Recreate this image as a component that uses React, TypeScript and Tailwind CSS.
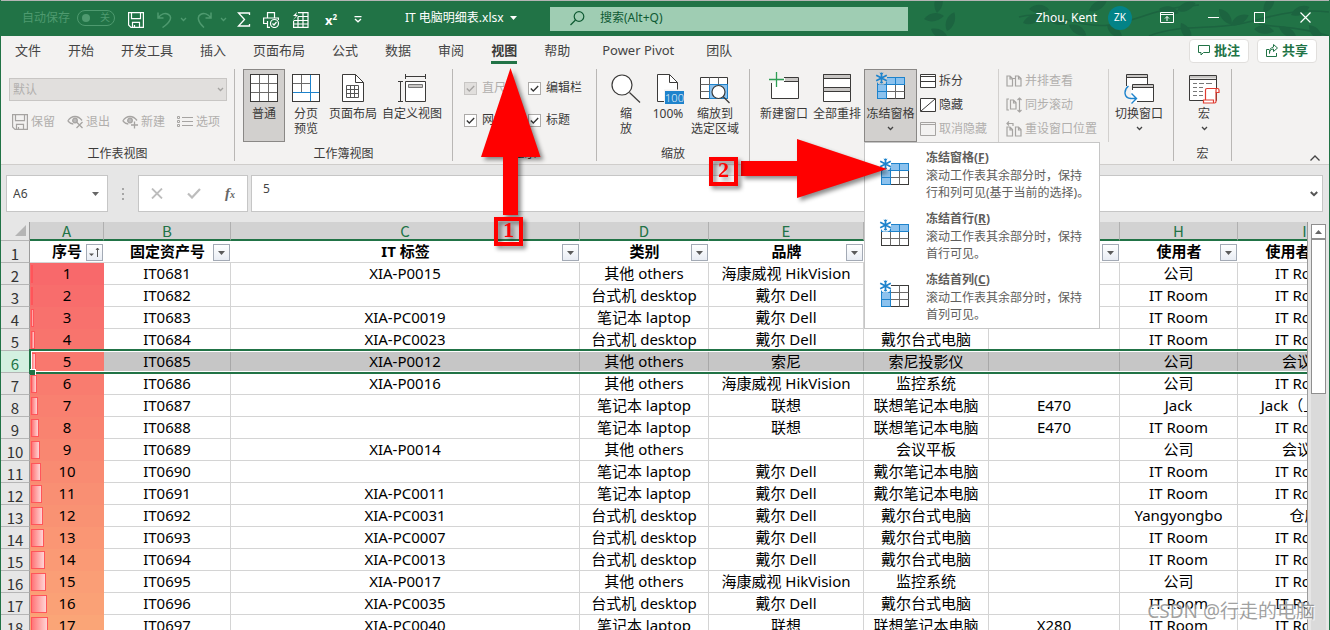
import type { ReactNode } from "react";

const INK = "#3b3a39";
const FADE = "#a6a4a2";
const BLUE = "#1e83cc";
const SKY = "#8cc2ee";

/* ---------- small glyphs ---------- */

function Chevron({ className = "", color = "#444" }: { className?: string; color?: string }) {
  return (
    <svg width="7" height="5" viewBox="0 0 7 5" className={className} fill="none" stroke={color} strokeWidth="1.300">
      <path d="M1 1l2.500 2.500L6 1" />
    </svg>
  );
}

function Caret({ color = "#666", className = "" }: { color?: string; className?: string }) {
  return (
    <svg width="7" height="4" viewBox="0 0 7 4" className={className}>
      <path d="M0 0h7L3.500 4z" fill={color} />
    </svg>
  );
}

function FreezeIcon({ mode, halo = "#fff", className = "" }: { mode: "both" | "row" | "col"; halo?: string; className?: string }) {
  const top = mode !== "col";
  const left = mode !== "row";
  return (
    <svg width="31" height="28" viewBox="0 0 31 28" fill="none" className={className}>
      <rect x="2.500" y="5.500" width="27" height="21" fill="#fff" stroke={INK} />
      <path d="M2.500 12.500h27M2.500 19.500h27M11.500 5.500v21M20.500 5.500v21" stroke="#6b6a69" />
      {top && (
        <g fill={SKY} stroke={BLUE}>
          <rect x="2.500" y="5.500" width="9" height="7" />
          <rect x="11.500" y="5.500" width="9" height="7" />
          <rect x="20.500" y="5.500" width="9" height="7" />
        </g>
      )}
      {left && (
        <g fill={SKY} stroke={BLUE}>
          <rect x="2.500" y="5.500" width="9" height="7" />
          <rect x="2.500" y="12.500" width="9" height="7" />
          <rect x="2.500" y="19.500" width="9" height="7" />
        </g>
      )}
      <path d="M2 5h10v4L9 12.500H4L2 10z" fill={halo} />
      <path d="M6.500.5v11M1.200 3.200l10.600 5.600M11.800 3.200L1.200 8.800" stroke={BLUE} strokeWidth="1.700" />
      <path d="M4.800 1l1.700 1.500L8.200 1M4.800 11l1.700-1.500L8.200 11" stroke={BLUE} />
    </svg>
  );
}

function SaveIcon({ color }: { color: string }) {
  return (
    <svg width="16" height="16" viewBox="0 0 16 16" fill="none" stroke={color} strokeWidth="1.200">
      <path d="M.6.6h14.800v14.800H3L.6 13z M3.500.6v6h9v-6M4.500 15.400v-5h7v5M6.500 13v2" />
    </svg>
  );
}

function EyeIcon({ kind }: { kind: "x" | "plus" }) {
  return (
    <svg width="17" height="14" viewBox="0 0 17 14" fill="none" stroke={FADE} strokeWidth="1.300">
      <path d="M.8 6C3 2.500 5.500 1.500 8 1.500S13 2.800 15 5.500M.8 6c1.600 1.800 3 2.800 5.500 3" />
      <circle cx="8" cy="5.500" r="2.300" fill="#bbb" />
      {kind === "x" ? <path d="M9.500 7l6 6M15.500 7l-6 6" /> : <path d="M12.500 6.500v7M9 10h7" />}
    </svg>
  );
}

function OptionsIcon() {
  return (
    <svg width="16" height="12" viewBox="0 0 16 12" fill="none" stroke={FADE}>
      <path d="M.5.5h2v2h-2zM.5 4.500h2v2h-2zM.5 8.500h2v2h-2zM5 1.500h11M5 5.500h11M5 9.500h11" />
    </svg>
  );
}

/* ---------- large ribbon icons ---------- */

const NormalIcon = (
  <svg width="28" height="28" viewBox="0 0 28 28" fill="none">
    <rect x=".5" y=".5" width="27" height="27" fill="#fff" stroke={INK} />
    <path d="M9.500 1v26M18.500 1v26M1 9.500h26M1 18.500h26" stroke="#6b6a69" />
  </svg>
);

const BreakIcon = (
  <svg width="28" height="28" viewBox="0 0 28 28" fill="none">
    <rect x=".5" y=".5" width="27" height="27" fill="#fff" stroke={INK} />
    <path d="M9.500 1v17M1 9.500h17" stroke="#6b6a69" />
    <path d="M18.500 1v26M1 18.500h26" stroke={BLUE} />
  </svg>
);

const PageIcon = (
  <svg width="22" height="28" viewBox="0 0 22 28" fill="none" stroke={INK}>
    <path d="M.5.500h13l8 8v19H.5z" fill="#fff" />
    <path d="M13.500.500v8h8" />
    <path d="M4.500 11.500h12v12h-12zM4.500 15.500h12M4.500 19.500h12M8.500 11.500v12M12.500 11.500v12" stroke="#555" />
  </svg>
);

const CustomViewIcon = (
  <svg width="28" height="28" viewBox="0 0 28 28" fill="none" stroke={INK}>
    <path d="M7.500 0v5M27.500 0v5M7.500 2.500h20M0 7.500h5M0 27.500h5M2.500 7.500v20" />
    <path d="M7.500 7.500h20v20h-20z" fill="#fff" />
    <path d="M10.500 10.500h14v3h-14z" fill="#c8c6c4" stroke="#777" />
  </svg>
);

const ZoomIcon = (
  <svg width="30" height="29" viewBox="0 0 30 29" fill="none" stroke={INK} strokeWidth="1.200">
    <circle cx="11" cy="11" r="10" fill="#fff" />
    <path d="M18.500 18.500L29 28.500" />
  </svg>
);

const HundredIcon = (
  <svg width="22" height="30" viewBox="0 0 22 30" fill="none" className="overflow-visible">
    <path d="M.5.500h12l8 8v19H.5z" fill="#fff" stroke={INK} />
    <path d="M12.500.500v8h8" stroke={INK} />
    <path d="M7 15.500h20V30H7z" fill="#f3f2f1" />
    <path d="M8 17h19v13H8z" fill={BLUE} />
    <text x="17.500" y="28" fill="#fff" fontSize="11" textAnchor="middle" fontFamily="Open Sans, sans-serif" fontWeight="300" textRendering="geometricPrecision">
      100
    </text>
  </svg>
);

const ZoomSelectionIcon = (
  <svg width="30" height="28" viewBox="0 0 30 28" fill="none" className="overflow-visible">
    <path d="M.5 3.500h27v21H.5z" fill="#fff" stroke={INK} />
    <path d="M9.500 10.500h18v14h-18z" fill={SKY} stroke={BLUE} />
    <path d="M.5 10.500h9M.5 17.500h9M9.500 3.500v7M18.500 3.500v7" stroke="#666" />
    <circle cx="18.500" cy="18" r="6.500" fill="#fff" stroke={INK} strokeWidth="1.200" />
    <path d="M23 22.500l6.500 6.500" stroke={INK} strokeWidth="1.200" />
  </svg>
);

const NewWindowIcon = (
  <svg width="31" height="28" viewBox="0 0 31 28" fill="none" className="overflow-visible">
    <path d="M2.500 3.500h27v21h-27z" fill="#fff" />
    <path d="M0 0h15v13H0z" fill="#f3f2f1" />
    <path d="M8 7h7v6H3V9z" fill="#fff" />
    <path d="M16 4h13v3H16z" fill="#c8c6c4" />
    <path d="M15 7.500h14M15 3.500h14.500v21h-27V9" stroke={INK} />
    <path d="M7.500-2v15M0 5.500h15" stroke="#2e9e55" strokeWidth="1.300" />
  </svg>
);

const ArrangeIcon = (
  <svg width="28" height="28" viewBox="0 0 28 28" fill="none" stroke={INK}>
    <path d="M.5.500h27v27H.5z" fill="#fff" />
    <path d="M.5.500h27v4H.5zM.5 13.500h27v4H.5z" fill="#c8c6c4" />
  </svg>
);

const SwitchIcon = (
  <svg width="30" height="30" viewBox="0 0 30 30" fill="none">
    <path d="M2.500.500h21v14h-21z" fill="#fff" stroke={INK} />
    <path d="M3 1h20v3H3z" fill="#c8c6c4" />
    <path d="M3 3.500h20" stroke={INK} />
    <path d="M0 12h13v15H0z" fill="#f3f2f1" />
    <path d="M8.500 10.500h21v17h-21z" fill="#fff" stroke={INK} />
    <path d="M9 11h20v2H9z" fill="#c8c6c4" />
    <path d="M9 13.500h20" stroke={INK} />
    <path d="M7 16h6v13H7z" fill="#fff" />
    <path d="M4.500 12C-.5 16-.5 24 7 24.500h5M7.500 19.500l5 5-5 5" stroke={BLUE} strokeWidth="1.400" />
  </svg>
);

const MacroIcon = (
  <svg width="30" height="29" viewBox="0 0 30 29" fill="none" className="overflow-visible">
    <path d="M.5 1.500h27v25H.5z" fill="#fff" stroke={INK} />
    <path d="M1 2h26v2.500H1z" fill="#c8c6c4" />
    <path d="M.5 5.500h27" stroke={INK} />
    <path d="M4 9.500h4M10 9.500h5M17 9.500h6M4 13.500h4M10 13.500h4M4 17.500h4M10 17.500h4M4 21.500h4M10 21.500h4" stroke="#777" />
    <path d="M16.500 26V16c0-1 .5-1.500 1.500-1.500h10.500c1 0 1.500.8 1.500 1.800V18.500h-3v9c0 .800-.500 1.500-1.500 1.500h-11v-3h10V29" fill="#fff" stroke="#e03c31" strokeWidth="1.200" />
    <path d="M27 18.500v-2.500c0-1 .5-1.500 1.200-1.500" stroke="#e03c31" strokeWidth="1.200" />
  </svg>
);

function SplitIcon() {
  return (
    <svg width="16" height="14" viewBox="0 0 16 14" fill="none" stroke={INK}>
      <path d="M.5.500h15v13H.5z" fill="#fff" />
      <path d="M1 2.500h14M1 7.500h14" />
    </svg>
  );
}
function HideIcon() {
  return (
    <svg width="16" height="14" viewBox="0 0 16 14" fill="none" stroke={INK}>
      <path d="M.5.500h15v13H.5z" fill="#fff" />
      <path d="M1 13L15 1" />
    </svg>
  );
}
function UnhideIcon() {
  return (
    <svg width="16" height="14" viewBox="0 0 16 14" fill="none" stroke={FADE}>
      <path d="M.5.500h15v13H.5z" />
      <path d="M1 2.500h14" />
    </svg>
  );
}
function SideIcon() {
  return (
    <svg width="16" height="14" viewBox="0 0 16 14" fill="none" stroke={FADE} strokeWidth="1.200">
      <path d="M1 2h3l2.500 2.500V12H1zM9.500 2h3L15 4.500V12H9.500zM4 2v3h2.500M12.500 2v3H15M6.500 4.500h3" />
    </svg>
  );
}
function SyncIcon() {
  return (
    <svg width="16" height="16" viewBox="0 0 16 16" fill="none" stroke={FADE} strokeWidth="1.200">
      <path d="M3 2H1v11h2M4.500 3h3L10 5.500V12H4.500zM7.500 3v3H10M13.500 1v14M11.500 3l2-2 2 2M11.500 13l2 2 2-2" />
    </svg>
  );
}
function ResetIcon() {
  return (
    <svg width="16" height="16" viewBox="0 0 16 16" fill="none" stroke={FADE} strokeWidth="1.200">
      <path d="M1 6h3l2.500 2.500V15H1zM9.500 6h3L15 8.500V15H9.500zM4 6v3h2.500M12.500 6v3H15M1 2.500h6V5M3 .5l-2 2 2 2" />
    </svg>
  );
}

/* ---------- title bar ---------- */

function Foliage() {
  const leaf = "M0 0C5-7 14-8 20-3C14 3 6 4 0 0z";
  const leaves: [number, number, number][] = [
    [5, 18, 0], [18, 12, -70], [12, 28, 40], [28, 30, -60],
    [110, 8, 10], [128, 16, 30], [104, 22, -10], [150, 24, 40], [170, 10, -20], [188, 24, 50],
    [240, 8, 20], [258, 10, -15], [262, 22, 70], [300, 8, 60], [312, 24, -20], [335, 28, 15],
    [345, 12, -50], [360, 26, 40], [372, 14, -15], [390, 24, 60],
  ];
  return (
    <svg width="410" height="35" viewBox="0 0 410 35" className="absolute right-0 top-0" fill="#1c6440">
      <g fill="none" stroke="#1c6440" strokeWidth="1.500">
        <path d="M100 16c30-8 60 12 90 8s40-16 90-20M230 35c30-12 60-6 90-12s50-16 90-12M340 23c20 4 40 2 70 12" />
      </g>
      {leaves.map(([x, y, r]) => (
        <path key={x + "-" + y} d={leaf} transform={`translate(${x} ${y}) rotate(${r})`} />
      ))}
    </svg>
  );
}

function TitleBar() {
  return (
    <header className="relative flex h-9 shrink-0 items-center overflow-hidden border-t border-[#b5b5b5] bg-[#217346] pb-0.5 text-[12px] text-white">
      <Foliage />
      <div className="flex h-full w-[404px] shrink-0 items-center pl-[21px]">
        <label htmlFor="autosave" className="text-[#4e9a6f]">自动保存</label>
        <button
          id="autosave"
          aria-label="自动保存"
          className="ml-[7px] flex h-4 w-[38px] items-center justify-between rounded-full border border-[#4e9a6f] pl-1 pr-1 text-[10px] text-[#4e9a6f]"
        >
          <span className="size-2 rounded-full bg-[#4e9a6f]" />
          <span>关</span>
        </button>
        <button aria-label="保存" className="ml-[13px] pt-1"><SaveIcon color="#fff" /></button>
        <button aria-label="撤消" className="ml-[13px] flex items-center gap-2 pt-1">
          <svg width="15" height="16" viewBox="0 0 15 16" fill="none" stroke="#4e9a6f" strokeWidth="1.500">
            <path d="M1 .5V6h5.500M1.500 5.500C4 2 8 .5 11.500 2.500s3 7-6 13" />
          </svg>
          <Chevron color="#4e9a6f" />
        </button>
        <button aria-label="恢复" className="ml-[10px] flex items-center gap-2 pt-1">
          <svg width="15" height="16" viewBox="0 0 15 16" fill="none" stroke="#4e9a6f" strokeWidth="1.500">
            <path d="M14 .5V6H8.500M13.500 5.500C11 2 7 .5 3.500 2.500s-3 7 3.500 13" />
          </svg>
          <Chevron color="#4e9a6f" />
        </button>
        <button aria-label="自动求和" className="ml-[10px] pt-1">
          <svg width="14" height="15" viewBox="0 0 14 15" fill="none" stroke="#fff" strokeWidth="1.300">
            <path d="M12.500 3V1H1.500l6 6.500-6 6.500h11v-2" />
          </svg>
        </button>
        <button aria-label="打印预览" className="ml-[12px] pt-1">
          <svg width="17" height="16" viewBox="0 0 17 16" fill="none" stroke="#fff" strokeWidth="1.200">
            <path d="M4.500 6V.6h7V6M4 11.500H.6V6h14.800v2M4.500 9v6.400H7" />
            <circle cx="11.500" cy="11.500" r="4" />
            <path d="M9.500 11.500l1.500 1.500 2.500-3" />
          </svg>
        </button>
        <button aria-label="表格" className="ml-[12px] pt-1">
          <svg width="17" height="16" viewBox="0 0 17 16" fill="none" stroke="#fff" strokeWidth="1.200">
            <path d="M6 .6h10v14.800H1.600V9M6 4.500h10M1.600 8.500H16M1.600 12H16M6 4.500v11M11 .6v15" />
            <path d="M5 0L1 4h3L1 8l5-5H4z" fill="#fff" stroke="none" />
          </svg>
        </button>
        <button aria-label="上标" className="ml-4 flex h-4 pt-0.5 text-[13px] font-bold leading-4">
          x<span className="text-[8px] leading-[10px]">2</span>
        </button>
        <button aria-label="自定义快速访问工具栏" className="ml-[17px] pt-1">
          <svg width="8" height="7" viewBox="0 0 8 7" fill="none" stroke="#fff" strokeWidth="1.300">
            <path d="M.5.700h7M1 3l3 2.800L7 3" />
          </svg>
        </button>
      </div>
      <button className="flex w-[145px] shrink-0 items-center gap-1.5">
        IT 电脑明细表.xlsx <Caret color="#fff" />
      </button>
      <label className="relative mt-0.5 flex h-6 w-[358px] shrink items-center bg-[#9fcdb3] pl-5 text-[#0f5a33]">
        <svg width="15" height="15" viewBox="0 0 15 15" fill="none" stroke="#0f5a33" strokeWidth="1.200">
          <circle cx="9" cy="5.500" r="4.800" />
          <path d="M5.500 9L.5 14" />
        </svg>
        <input
          aria-label="搜索"
          placeholder="搜索(Alt+Q)"
          className="ml-[15px] min-w-0 flex-1 bg-transparent pb-0.5 outline-none placeholder:text-[#0f5a33]"
        />
      </label>
      <div className="relative ml-auto flex shrink-0 items-center pr-[18px]">
        <span>Zhou, Kent</span>
        <span className="ml-[11px] flex size-6 items-center justify-center rounded-full bg-[#038387] text-[10px]">ZK</span>
        <button aria-label="功能区显示选项" className="ml-7">
          <svg width="14" height="11" viewBox="0 0 14 11" fill="none" stroke="#fff">
            <path d="M.5.500h13v10H.5zM.5 2.500h13M7 9V4.500M5 6.500l2-2 2 2" />
          </svg>
        </button>
        <button aria-label="最小化" className="ml-[34px] w-[11px] py-1"><span className="block h-px bg-white" /></button>
        <button aria-label="最大化" className="ml-[35px] size-[11px] border border-white" />
        <button aria-label="关闭" className="ml-[35px]">
          <svg width="11" height="11" viewBox="0 0 11 11" stroke="#fff" strokeWidth="1.200"><path d="M.5.500l10 10M10.500.500l-10 10" /></svg>
        </button>
      </div>
    </header>
  );
}

/* ---------- tabs ---------- */

const TABS = ["文件", "开始", "开发工具", "插入", "页面布局", "公式", "数据", "审阅", "视图", "帮助", "Power Pivot", "团队"];

function Tabs() {
  return (
    <nav className="flex h-[30px] shrink-0 items-start pl-[14px] pr-3 text-[13px]">
      <div className="flex gap-[27px]">
        {TABS.map((t) => (
          <button
            key={t}
            className={
              t === "视图"
                ? "h-7 border-b-[3px] border-[#217346] pt-[3px] font-bold leading-[22px] text-[#3b3a39]"
                : t === "Power Pivot"
                  ? "h-7 border-b-[3px] border-transparent px-[5px] pt-[3px] leading-[22px] text-[#444]"
                  : "h-7 border-b-[3px] border-transparent pt-[3px] leading-[22px] text-[#444]"
            }
          >
            {t}
          </button>
        ))}
      </div>
      <div className="ml-auto flex gap-2 pt-[3px] font-bold text-[#217346]">
        <button className="flex h-6 w-[60px] items-center justify-center gap-1 rounded-sm border border-[#e1dfdd] bg-white pb-px">
          <svg width="12" height="11" viewBox="0 0 12 11" fill="none" stroke="#217346"><path d="M.5.500h11v7h-6l-2.500 2.500v-2.500h-2.500z" /></svg>
          批注
        </button>
        <button className="flex h-6 w-[60px] items-center justify-center gap-1 rounded-sm border border-[#e1dfdd] bg-white pb-px">
          <svg width="12" height="13" viewBox="0 0 12 13" fill="none" stroke="#217346"><path d="M3 5.500H.5v7h10V9M3.500 9.500c0-3 1.500-4.500 4-4.500v2.500L11.500 4 7.500.500V3C4.500 3.500 3 6 3.500 9.500z" /></svg>
          共享
        </button>
      </div>
    </nav>
  );
}

/* ---------- ribbon ---------- */

function Group({ label, className, children }: { label?: string; className: string; children: ReactNode }) {
  return (
    <section className={`flex shrink-0 flex-col border-r border-[#b9b7b5] ${className}`}>
      <div className="flex h-[73px]">{children}</div>
      <h2 className="mt-[5px] h-[14px] text-center text-[12px] leading-[14px]">{label}</h2>
    </section>
  );
}

function Big({ icon, lines, className, active, arrow }: { icon: ReactNode; lines: string[]; className: string; active?: boolean; arrow?: boolean }) {
  return (
    <button
      className={`flex h-[73px] flex-col items-center border pt-1 leading-[15px] ${active ? "border-[#8a8886] bg-[#d2d0ce]" : "border-transparent"} ${className}`}
    >
      <span className="flex h-7 items-start justify-center overflow-visible">{icon}</span>
      <span className="mt-1 flex flex-col whitespace-nowrap">
        {lines.map((l) => (
          <span key={l}>{l}</span>
        ))}
      </span>
      {arrow && <Chevron className="mt-[5px]" />}
    </button>
  );
}

function Small({ icon, label, faded }: { icon: ReactNode; label: string; faded?: boolean }) {
  return (
    <button disabled={faded} className={`flex h-6 items-center gap-[3px] whitespace-nowrap ${faded ? "text-[#b1afad]" : ""}`}>
      <span className="flex w-4 justify-center">{icon}</span>
      {label}
    </button>
  );
}

function Check({ label, disabled }: { label: string; disabled?: boolean }) {
  return (
    <label className={`flex h-8 items-center gap-[5px] whitespace-nowrap ${disabled ? "text-[#b1afad]" : ""}`}>
      <span className="grid size-[13px] place-items-center">
        <input
          type="checkbox"
          defaultChecked
          disabled={disabled}
          className="size-[13px] appearance-none border border-[#acaaa8] bg-white [grid-area:1/1] disabled:border-[#c8c6c4] disabled:bg-[#e1dfdd]"
        />
        <svg width="9" height="7" viewBox="0 0 9 7" fill="none" stroke={disabled ? "#a6a4a2" : "#333"} strokeWidth="1.300" className="pointer-events-none [grid-area:1/1]">
          <path d="M.8 3.500L3.300 6 8.200 1" />
        </svg>
      </span>
      {label}
    </label>
  );
}

const FREEZE_ITEMS: { mode: "both" | "row" | "col"; title: string; k: string; text: string[] }[] = [
  { mode: "both", title: "冻结窗格", k: "F", text: ["滚动工作表其余部分时，保持", "行和列可见(基于当前的选择)。"] },
  { mode: "row", title: "冻结首行", k: "R", text: ["滚动工作表其余部分时，保持", "首行可见。"] },
  { mode: "col", title: "冻结首列", k: "C", text: ["滚动工作表其余部分时，保持", "首列可见。"] },
];

function FreezeMenu() {
  return (
    <div role="menu" className="absolute left-0 top-full z-20 w-[236px] border border-[#c6c6c6] bg-white pb-[2px] text-[12px]">
      {FREEZE_ITEMS.map((it) => (
        <button key={it.k} role="menuitem" className="flex h-[61px] w-full items-start pl-[14px] pt-[6px] text-left">
          <span className="pt-[9px]"><FreezeIcon mode={it.mode} /></span>
          <span className="ml-4 whitespace-nowrap text-[#605e5c]">
            <span className="block font-bold leading-[18px]">
              {it.title}(<u>{it.k}</u>)
            </span>
            {it.text.map((line) => (
              <span key={line} className="block leading-[17px]">{line}</span>
            ))}
          </span>
        </button>
      ))}
    </div>
  );
}

function Ribbon() {
  return (
    <div className="flex shrink-0 border-b border-[#cfcdcb] pb-[3px] pt-[3px] text-[12px] text-[#3b3a39]">
      <Group label="工作表视图" className="w-[234px]">
        <div className="flex flex-1 flex-col pl-2 pr-[7px] pt-[9px] text-[#b1afad]">
          <div className="grid">
            <select
              disabled
              aria-label="工作表视图"
              className="h-[23px] appearance-none border border-[#c8c6c4] bg-[#e1dfdd] pl-[3px] opacity-100 [grid-area:1/1]"
            >
              <option>默认</option>
            </select>
            <Chevron color="#a6a4a2" className="mr-[3px] self-center justify-self-end [grid-area:1/1]" />
          </div>
          <div className="mt-[9px] flex items-center pl-[3px]">
            <button disabled className="flex h-6 w-[55px] items-center gap-[3px]"><SaveIcon color={FADE} />保留</button>
            <button disabled className="flex h-6 w-[55px] items-center gap-[2px]"><EyeIcon kind="x" />退出</button>
            <button disabled className="flex h-6 w-[55px] items-center gap-[2px]"><EyeIcon kind="plus" />新建</button>
            <button disabled className="flex h-6 items-center gap-[3px]"><OptionsIcon />选项</button>
          </div>
        </div>
      </Group>
      <Group label="工作簿视图" className="w-[218px]">
        <div className="flex gap-px pl-2">
          <Big icon={NormalIcon} lines={["普通"]} className="w-[42px]" active />
          <Big icon={BreakIcon} lines={["分页", "预览"]} className="w-[40px]" />
          <Big icon={PageIcon} lines={["页面布局"]} className="w-[52px]" />
          <Big icon={CustomViewIcon} lines={["自定义视图"]} className="w-[64px]" />
        </div>
      </Group>
      <Group label="显示" className="w-[144px]">
        <div className="grid grid-cols-[64px_1fr] content-start pl-[11px] pt-[3px]">
          <Check label="直尺" disabled />
          <Check label="编辑栏" />
          <Check label="网格线" />
          <Check label="标题" />
        </div>
      </Group>
      <Group label="缩放" className="w-[153px]">
        <div className="flex pl-2">
          <Big icon={ZoomIcon} lines={["缩", "放"]} className="w-[42px]" />
          <Big icon={HundredIcon} lines={["100%"]} className="w-[42px]" />
          <Big icon={ZoomSelectionIcon} lines={["缩放到", "选定区域"]} className="w-[52px]" />
        </div>
      </Group>
      <Group className="w-[424px]">
        <div className="flex pl-[7px]">
          <Big icon={NewWindowIcon} lines={["新建窗口"]} className="w-[54px]" />
          <Big icon={ArrangeIcon} lines={["全部重排"]} className="w-[52px]" />
          <div className="relative ml-px">
            <Big icon={<FreezeIcon mode="both" halo="#d2d0ce" className="-mt-0.5" />} lines={["冻结窗格"]} className="w-[53px]" active arrow />
            <FreezeMenu />
          </div>
          <div className="ml-[3px] w-[79px] border-r border-[#d2d0ce]">
            <Small icon={<SplitIcon />} label="拆分" />
            <Small icon={<HideIcon />} label="隐藏" />
            <Small icon={<UnhideIcon />} label="取消隐藏" faded />
          </div>
          <div className="w-[110px] border-r border-[#d2d0ce] pl-[7px]">
            <Small icon={<SideIcon />} label="并排查看" faded />
            <Small icon={<SyncIcon />} label="同步滚动" faded />
            <Small icon={<ResetIcon />} label="重设窗口位置" faded />
          </div>
          <Big icon={SwitchIcon} lines={["切换窗口"]} className="ml-[3px] w-[54px]" arrow />
        </div>
      </Group>
      <Group label="宏" className="w-[58px]">
        <div className="flex pl-1">
          <Big icon={MacroIcon} lines={["宏"]} className="w-[52px]" arrow />
        </div>
      </Group>
      <button aria-label="折叠功能区" className="ml-auto mr-[9px] self-end">
        <svg width="10" height="6" viewBox="0 0 10 6" fill="none" stroke="#444" strokeWidth="1.300"><path d="M.5 5.500L5 1l4.500 4.500" /></svg>
      </button>
    </div>
  );
}

/* ---------- formula bar ---------- */

function FormulaBar() {
  return (
    <div className="flex shrink-0 pb-[10px] pl-[5px] pr-[6px] pt-[10px] text-[13px] text-[#444]">
      <div className="flex h-[37px] w-[102px] items-center border border-[#c6c6c6] bg-white pl-[6px] pr-2">
        <input aria-label="名称框" defaultValue="A6" className="w-0 flex-1 text-[12px] outline-none" />
        <Caret />
      </div>
      <svg width="2" height="12" viewBox="0 0 2 12" fill="#a6a6a6" className="mx-[14px] self-center">
        <path d="M0 0h2v2H0zM0 5h2v2H0zM0 10h2v2H0z" />
      </svg>
      <div className="flex h-[37px] w-[110px] items-center justify-between border border-[#c6c6c6] bg-white pl-3 pr-[12px]">
        <button aria-label="取消">
          <svg width="12" height="11" viewBox="0 0 12 11" stroke="#bdbdbd" strokeWidth="1.800"><path d="M1 .5l10 10M11 .5l-10 10" /></svg>
        </button>
        <button aria-label="输入">
          <svg width="14" height="11" viewBox="0 0 14 11" fill="none" stroke="#bdbdbd" strokeWidth="2.200"><path d="M1 5.500L5 9.500 13 1" /></svg>
        </button>
        <button aria-label="插入函数" className="font-['Liberation_Serif',serif] text-[15px] font-bold italic leading-4 text-[#666]">
          f<span className="text-[10px]">x</span>
        </button>
      </div>
      <div className="ml-[3px] flex h-[37px] flex-1 items-center border border-[#c6c6c6] bg-white pl-[11px] pr-1">
        <input aria-label="编辑栏" defaultValue="5" className="h-5 flex-1 self-start pt-1 text-[12px] outline-none" />
        <svg width="8" height="6" viewBox="0 0 8 6" fill="none" stroke="#555" strokeWidth="2"><path d="M.8 1L4 4.200 7.200 1" /></svg>
      </div>
    </div>
  );
}

/* ---------- sheet ---------- */

const COLS = ["A", "B", "C", "D", "E", "F", "G", "H", "I"];
const HEADS = ["序号", "固定资产号", "IT 标签", "类别", "品牌", "", "", "使用者", "使用者 部门"];
const OTHERS = "其他 others";
const DESK = "台式机 desktop";
const LAP = "笔记本 laptop";
const HIK = "海康威视 HikVision";
const DELL = "戴尔 Dell";
const ROOM = "IT Room";

const DATA: string[][] = [
  ["XIA-P0015", OTHERS, HIK, "", "", "公司", ROOM],
  ["", DESK, DELL, "", "", ROOM, ROOM],
  ["XIA-PC0019", LAP, DELL, "", "", ROOM, ROOM],
  ["XIA-PC0023", DESK, DELL, "戴尔台式电脑", "", ROOM, ROOM],
  ["XIA-P0012", OTHERS, "索尼", "索尼投影仪", "", "公司", "会议室"],
  ["XIA-P0016", OTHERS, HIK, "监控系统", "", "公司", ROOM],
  ["", LAP, "联想", "联想笔记本电脑", "E470", "Jack", "Jack（上海）"],
  ["", LAP, "联想", "联想笔记本电脑", "E470", ROOM, ROOM],
  ["XIA-P0014", OTHERS, "", "会议平板", "", "公司", "会议室"],
  ["", LAP, DELL, "戴尔笔记本电脑", "", ROOM, ROOM],
  ["XIA-PC0011", LAP, DELL, "戴尔笔记本电脑", "", ROOM, ROOM],
  ["XIA-PC0031", DESK, DELL, "戴尔台式电脑", "", "Yangyongbo", "仓库"],
  ["XIA-PC0007", DESK, DELL, "戴尔台式电脑", "", ROOM, ROOM],
  ["XIA-PC0013", DESK, DELL, "戴尔台式电脑", "", ROOM, ROOM],
  ["XIA-P0017", OTHERS, HIK, "监控系统", "", "公司", ROOM],
  ["XIA-PC0035", DESK, DELL, "戴尔台式电脑", "", ROOM, ROOM],
  ["XIA-PC0040", LAP, "联想", "联想笔记本电脑", "X280", ROOM, ROOM],
];

function scaleColor(n: number) {
  const t = (n - 1) / 16;
  return `rgb(${Math.round(248 + 2 * t)}, ${Math.round(105 + 60 * t)}, ${Math.round(107 + 12 * t)})`;
}

function FilterButton({ sorted }: { sorted?: boolean }) {
  return (
    <button
      aria-label="筛选"
      className="absolute bottom-px right-px flex size-[17px] items-center justify-center border border-[#a3aab5] bg-linear-to-b from-white to-[#e9edf4]"
    >
      {sorted ? (
        <svg width="11" height="11" viewBox="0 0 11 11" fill="none" stroke="#555">
          <path d="M8.500 1v9M7 3l1.500-2L10 3" />
          <path d="M0 6.500h5L2.500 9z" fill="#555" stroke="none" />
        </svg>
      ) : (
        <Caret color="#5b5b5b" />
      )}
    </button>
  );
}

const ROW_HEAD =
  "border-b border-r border-b-[#b5b5b5] border-r-[#9b9b9b] p-0 align-bottom font-['Noto_Sans_CJK_SC',sans-serif] font-normal leading-[17px]";

function Sheet() {
  return (
    <div className="flex min-h-0 flex-1">
      <div className="min-w-0 flex-1 overflow-hidden border-r border-[#9b9b9b]">
        <table className="w-[1371px] table-fixed border-separate border-spacing-0 text-center text-[15px] text-black">
          <colgroup>
            <col className="w-[29px]" />
            <col className="w-[74px]" />
            <col className="w-[127px]" />
            <col className="w-[349px]" />
            <col className="w-[129px]" />
            <col className="w-[155px]" />
            <col className="w-[125px]" />
            <col className="w-[131px]" />
            <col className="w-[118px]" />
            <col className="w-[134px]" />
          </colgroup>
          <thead>
            <tr className="h-[19px]">
              <td className="border-b border-r border-b-[#b5b5b5] border-r-[#9b9b9b] p-0 pr-[3px] align-bottom">
                <svg width="11" height="11" viewBox="0 0 11 11" className="mb-1 ml-auto"><path d="M11 0v11H0z" fill="#b5b5b5" /></svg>
              </td>
              {COLS.map((c) => (
                <th
                  key={c}
                  scope="col"
                  className="border-b-2 border-r border-b-[#217346] border-r-[#b0b0b0] bg-[#d2d2d2] p-0 pt-px font-['Noto_Sans_CJK_SC',sans-serif] font-normal leading-[16px] text-[#217346]"
                >
                  {c}
                </th>
              ))}
            </tr>
          </thead>
          <tbody>
            <tr className="h-[22px] bg-white">
              <th scope="row" className={`bg-[#e6e6e6] text-[#333] ${ROW_HEAD}`}>1</th>
              {HEADS.map((h, i) => (
                <td key={COLS[i]} className="relative whitespace-nowrap border-b border-[#d4d4d4] p-0 font-bold leading-[21px]">
                  {h}
                  {i < 8 && <FilterButton sorted={i === 0} />}
                </td>
              ))}
            </tr>
            {DATA.map((row, i) => {
              const n = i + 1;
              const sel = n === 5;
              return (
                <tr key={n} className={sel ? "relative h-[22px] bg-[#c6c6c6]" : "h-[22px] bg-white"}>
                  <th scope="row" className={`${sel ? "bg-[#d3f0e0] text-[#217346]" : "bg-[#e6e6e6] text-[#333]"} ${ROW_HEAD}`}>
                    {n + 1}
                    {sel && (
                      <span className="pointer-events-none absolute -bottom-px -top-[2px] left-[28px] right-0 z-10 border-2 border-[#217346] shadow-[inset_0_0_0_1px_white]">
                        <span className="absolute -bottom-[3px] -left-px size-[6px] border-r border-t border-white bg-[#217346]" />
                      </span>
                    )}
                  </th>
                  <td className="p-0 align-top" style={{ backgroundColor: scaleColor(n) }}>
                    <div className="relative leading-[21px]">
                      <span
                        className="absolute left-px top-[2px] h-[18px] border border-[#ff555a] bg-linear-to-r from-[#ff7478] to-[#ffd3d5]"
                        style={{ width: n }}
                      />
                      <span className="relative">{n}</span>
                    </div>
                  </td>
                  {["IT0" + (680 + n), ...row].map((v, j) => (
                    <td
                      key={COLS[j + 1]}
                      className={`overflow-hidden whitespace-nowrap border-b border-r p-0 leading-[21px] ${sel ? "border-[#a8a8a8]" : "border-[#d4d4d4]"}`}
                    >
                      {v}
                    </td>
                  ))}
                </tr>
              );
            })}
          </tbody>
        </table>
      </div>
      <div className="ml-[3px] mr-[3px] mt-[2px] flex w-[15px] shrink-0 flex-col bg-[#dadada]">
        <button aria-label="向上滚动" className="flex h-[15px] items-center justify-center border border-[#8f8f8f] bg-white">
          <Caret className="rotate-180" />
        </button>
        <div className="h-[155px] border border-[#8f8f8f] bg-white" />
      </div>
    </div>
  );
}

/* ---------- callouts ---------- */

function Callouts() {
  return (
    <div className="pointer-events-none absolute inset-0 z-30 overflow-hidden font-['Liberation_Serif',serif] text-[22px] font-bold leading-[18px] text-[#f00]">
      <svg width="900" height="250" viewBox="0 0 900 250" className="absolute left-0 top-0 drop-shadow-[3px_3px_2px_rgba(0,0,0,0.45)]" fill="#f00">
        <path d="M510.500 68L540.500 157H518v58h-15v-58h-22z" />
        <path d="M741 161h56v-22l90 30-90 29v-22h-56z" />
      </svg>
      <span className="absolute left-[494px] top-[217px] flex size-[29px] justify-center border-4 border-[#f00] drop-shadow-[3px_3px_2px_rgba(0,0,0,0.45)]">1</span>
      <span className="absolute left-[709px] top-[157px] flex size-[29px] justify-center border-4 border-[#f00] drop-shadow-[3px_3px_2px_rgba(0,0,0,0.45)]">2</span>
    </div>
  );
}

export default function App() {
  return (
    <div className="relative flex h-screen flex-col overflow-hidden border-x border-[#217346] bg-[#e6e6e6] font-['Noto_Sans','Noto_Sans_CJK_SC',sans-serif]">
      <TitleBar />
      <div className="shrink-0 bg-[#f3f2f1]">
        <Tabs />
        <Ribbon />
      </div>
      <FormulaBar />
      <Sheet />
      <div className="absolute inset-y-0 -left-px right-0">
        <Callouts />
      </div>
      <p className="pointer-events-none absolute bottom-[7px] right-[14px] z-30 text-[19px] leading-6 text-[#777]/70 [text-shadow:1px_1px_1px_white]">
        CSDN @行走的电脑
      </p>
    </div>
  );
}
